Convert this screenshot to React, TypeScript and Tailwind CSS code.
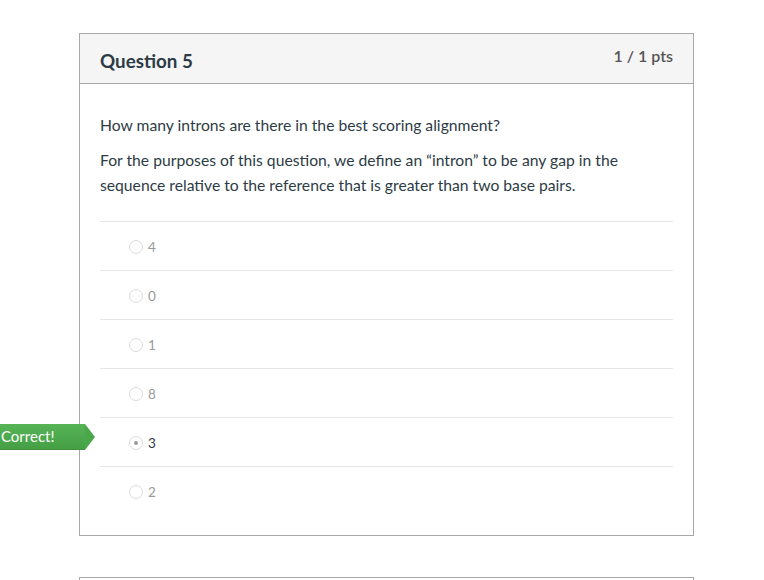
import React from 'react';

interface Answer {
  id: number;
  label: string;
  selected?: boolean;
  correct?: boolean;
}

const answers: Answer[] = [
  { id: 1, label: '4' },
  { id: 2, label: '0' },
  { id: 3, label: '1' },
  { id: 4, label: '8' },
  { id: 5, label: '3', selected: true, correct: true },
  { id: 6, label: '2' },
];

const CorrectFlag: React.FC = () => (
  <div className="absolute left-[-100px] top-[6px] flex h-[26px] items-stretch">
    <div className="flex w-[85px] items-center border-b border-[#3f8f3f] bg-gradient-to-b from-[#56b356] to-[#45a045] pl-[1px] text-[15px] text-white">
      Correct!
    </div>
    <svg width="10" height="26" viewBox="0 0 10 26" className="block">
      <polygon points="0,0 10,13 0,26" fill="#4aa84a" />
    </svg>
  </div>
);

const App: React.FC = () => {
  return (
    <div className="min-h-[580px] w-[764px] overflow-hidden bg-white pl-[79px] pt-[33px] font-['Lato','Noto_Sans',sans-serif]">
      <div className="w-[615px] border border-[#a8a8a8]">
        <div className="flex h-[50px] items-start justify-between border-b border-[#a8a8a8] bg-[#f5f5f5] px-[20px]">
          <h2 className="pt-[13px] text-[18.8px] font-bold text-[#2d3b45]">Question 5</h2>
          <span className="pt-[10px] text-[16px] font-semibold text-[#555]">1 / 1 pts</span>
        </div>
        <div className="px-[20px] pb-[20px] pt-[30px] text-[15.7px] text-[#2d3b45]">
          <p className="leading-[22px]">How many introns are there in the best scoring alignment?</p>
          <p className="mt-[12px] leading-[25px]">
            For the purposes of this question, we define an “intron” to be any gap in the sequence relative to the
            reference that is greater than two base pairs.
          </p>
          <div className="mt-[23px]">
            {answers.map((a) => (
              <div
                key={a.id}
                className="relative flex h-[49px] items-center border-t border-[#e6e6e6] pl-[29px]"
              >
                {a.correct ? <CorrectFlag /> : null}
                <span className="mt-[1px] flex h-[14px] w-[14px] items-center justify-center rounded-full border border-[#dcdcdc] bg-white">
                  {a.selected ? <span className="h-[4px] w-[4px] rounded-full bg-[#999]" /> : null}
                </span>
                <span
                  className={
                    a.selected
                      ? 'ml-[5px] pt-[2px] text-[13.5px] text-[#2d3b45]'
                      : 'ml-[5px] pt-[2px] text-[13.5px] text-[#9a9a9a]'
                  }
                >
                  {a.label}
                </span>
              </div>
            ))}
          </div>
        </div>
      </div>
      <div className="mt-[41px] h-[20px] w-[615px] border-l border-r border-t border-[#a8a8a8]" />
    </div>
  );
};

export default App;
